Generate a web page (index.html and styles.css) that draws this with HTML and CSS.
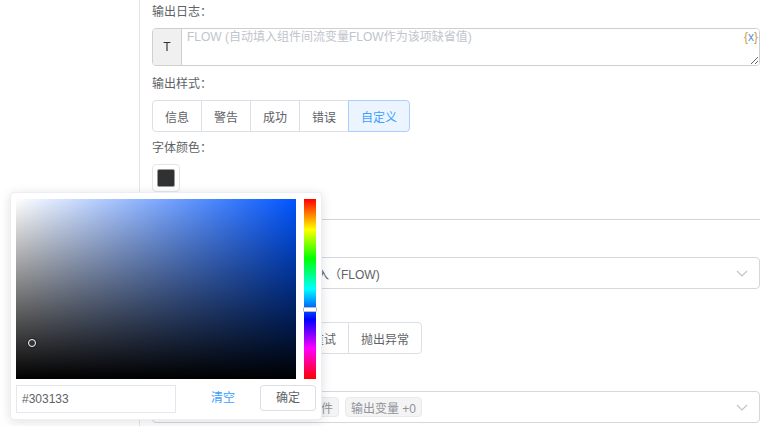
FILE: index.html
```html
<!DOCTYPE html>
<html lang="zh-CN">
<head>
<meta charset="utf-8">
<title>输出日志</title>
<link rel="stylesheet" href="styles.css">
</head>
<body>
<div class="page">
  <aside class="side"></aside>
  <main class="panel">
    <div class="item item-log">
      <div class="label">输出日志：</div>
      <div class="ta-wrap">
        <div class="prefix">T</div>
        <textarea class="ta" placeholder="FLOW (自动填入组件间流变量FLOW作为该项缺省值)"></textarea>
        <span class="var"><i>{</i>x<i>}</i></span>
      </div>
    </div>
    <div class="item item-style">
      <div class="label">输出样式：</div>
      <div class="btn-group">
        <span class="btn">信息</span>
        <span class="btn">警告</span>
        <span class="btn">成功</span>
        <span class="btn">错误</span>
        <span class="btn active">自定义</span>
      </div>
    </div>
    <div class="item">
      <div class="label">字体颜色：</div>
      <div class="swatch"><span class="swatch-color"></span></div>
    </div>
    <div class="divider"></div>
    <div class="item item-input">
      <div class="label">输入参数：</div>
      <div class="select">
        <span class="select-text">使用组件间的流变量作为输入（FLOW)</span>
        <svg class="chev" width="12" height="7" viewBox="0 0 12 7"><polyline points="1,1 6,6 11,1" fill="none" stroke="#c0c4cc" stroke-width="1.2"/></svg>
      </div>
    </div>
    <div class="item item-error">
      <div class="label">异常处理：</div>
      <div class="btn-group">
        <span class="btn">停止</span>
        <span class="btn">忽略</span>
        <span class="btn">跳过</span>
        <span class="btn">重试</span>
        <span class="btn">抛出异常</span>
      </div>
    </div>
    <div class="item item-output">
      <div class="label">输出参数：</div>
      <div class="select">
        <span class="tag">流程变量</span>
        <span class="tag">全部流程输出组件</span>
        <span class="tag">输出变量 +0</span>
        <svg class="chev" width="12" height="7" viewBox="0 0 12 7"><polyline points="1,1 6,6 11,1" fill="none" stroke="#c0c4cc" stroke-width="1.2"/></svg>
      </div>
    </div>
  </main>

  <div class="picker">
    <div class="pk-main">
      <div class="sat">
        <span class="cursor"></span>
      </div>
      <div class="hue">
        <span class="hue-thumb"></span>
      </div>
    </div>
    <div class="pk-foot">
      <div class="hex">#303133</div>
      <span class="clear">清空</span>
      <span class="ok">确定</span>
    </div>
  </div>
</div>
</body>
</html>
```

FILE: styles.css
```css
* { box-sizing: border-box; }
html, body { margin: 0; padding: 0; background: #fff; }
body {
  font-family: "Liberation Sans", "Noto Sans CJK SC", sans-serif;
  font-size: 12px;
  color: #606266;
}
.page {
  position: relative;
  display: flex;
  width: 764px;
  height: 426px;
  overflow: hidden;
}
.side {
  flex: none;
  width: 140px;
  border-right: 1px solid #e6e6e6;
}
.panel {
  flex: 1;
  padding: 0 4px 0 12px;
}
.label {
  height: 24px;
  line-height: 24px;
  margin-bottom: 4px;
  color: #606266;
}
.item-log { margin-bottom: 6px; }
.item-style { margin-bottom: 4px; }
.item-input { margin-top: 9px; }
.item-error { margin-top: 5px; }
.item-output { margin-top: 9px; }

.ta-wrap {
  position: relative;
  display: flex;
  height: 38px;
  border: 1px solid #cfcfcf;
  border-radius: 4px;
  overflow: hidden;
}
.prefix {
  flex: none;
  width: 29px;
  background: #f0f0f0;
  border-right: 1px solid #cfcfcf;
  display: flex;
  align-items: center;
  justify-content: center;
  color: #303133;
  font-size: 12px;
}
.ta {
  flex: 1;
  height: 36px;
  border: none;
  outline: none;
  resize: vertical;
  padding: 0 20px 0 5px;
  font-family: inherit;
  font-size: 12px;
  line-height: 16px;
  color: #606266;
  background: #fff;
}
.ta::placeholder { color: #c0c4cc; }
.var {
  position: absolute;
  right: 1px;
  top: 0;
  line-height: 16px;
  font-size: 12px;
  color: #5b8fd6;
  font-style: normal;
}
.var i { font-style: normal; color: #d19a4a; }

.btn-group {
  display: inline-flex;
  height: 32px;
}
.btn {
  display: flex;
  align-items: center;
  padding: 0 12px;
  border: 1px solid #dcdfe6;
  margin-left: -1px;
  background: #fff;
  color: #606266;
}
.btn:first-child { margin-left: 0; border-radius: 4px 0 0 4px; }
.btn:last-child { border-radius: 0 4px 4px 0; }
.btn.active {
  position: relative;
  background: #ecf5ff;
  border-color: #a8d0ff;
  color: #409eff;
}

.swatch {
  width: 28px;
  height: 28px;
  padding: 4px;
  border: 1px solid #e6e6e6;
  border-radius: 4px;
}
.swatch-color {
  display: block;
  width: 18px;
  height: 18px;
  background: #303133;
  border: 1px solid #999;
  border-radius: 2px;
}
.divider {
  margin-top: 27px;
  height: 1px;
  background: #d4d4d4;
}

.select {
  display: flex;
  align-items: center;
  height: 32px;
  border: 1px solid #d4d7de;
  border-radius: 4px;
  padding: 0 11px 0 12px;
  color: #606266;
}
.select-text { flex: 1; padding-left: 8px; }
.chev { margin-left: auto; flex: none; }
.tag {
  display: inline-flex;
  align-items: center;
  height: 20px;
  padding: 0 5px;
  margin-right: 6px;
  background: #f4f4f5;
  border: 1px solid #e9e9eb;
  border-radius: 4px;
  color: #909399;
  font-size: 12px;
}

.picker {
  position: absolute;
  left: 10px;
  top: 192px;
  width: 312px;
  padding: 6px 5px 6px;
  background: #fff;
  border: 1px solid #ebeef5;
  border-radius: 4px;
  box-shadow: 0 2px 12px rgba(0, 0, 0, 0.12);
}
.pk-main {
  display: flex;
  gap: 8px;
}
.sat {
  position: relative;
  width: 280px;
  height: 180px;
  background:
    linear-gradient(to top, #000, rgba(0, 0, 0, 0)),
    linear-gradient(to right, #fff, rgba(255, 255, 255, 0)),
    #0055ff;
}
.cursor {
  position: absolute;
  left: 16px;
  top: 144px;
  width: 8px;
  height: 8px;
  margin: -4px 0 0 -4px;
  border: 1.5px solid #fff;
  border-radius: 50%;
  box-shadow: 0 0 1px 1px rgba(0, 0, 0, 0.3);
}
.hue {
  position: relative;
  width: 12px;
  height: 180px;
  background: linear-gradient(to bottom, #f00 0%, #ff0 17%, #0f0 33%, #0ff 50%, #00f 67%, #f0f 83%, #f00 100%);
}
.hue-thumb {
  position: absolute;
  left: -1px;
  top: 108px;
  width: 14px;
  height: 5px;
  background: #fff;
  border: 1px solid #bbb;
  border-radius: 1px;
}
.pk-foot {
  display: flex;
  align-items: flex-start;
  margin-top: 6px;
}
.hex {
  width: 160px;
  height: 28px;
  line-height: 26px;
  padding-left: 5px;
  border: 1px solid #e4e7ed;
  color: #606266;
}
.clear {
  margin-left: 35px;
  line-height: 26px;
  color: #409eff;
}
.ok {
  margin-left: auto;
  width: 56px;
  height: 26px;
  line-height: 24px;
  text-align: center;
  border: 1px solid #dcdfe6;
  border-radius: 3px;
  color: #606266;
}
```
